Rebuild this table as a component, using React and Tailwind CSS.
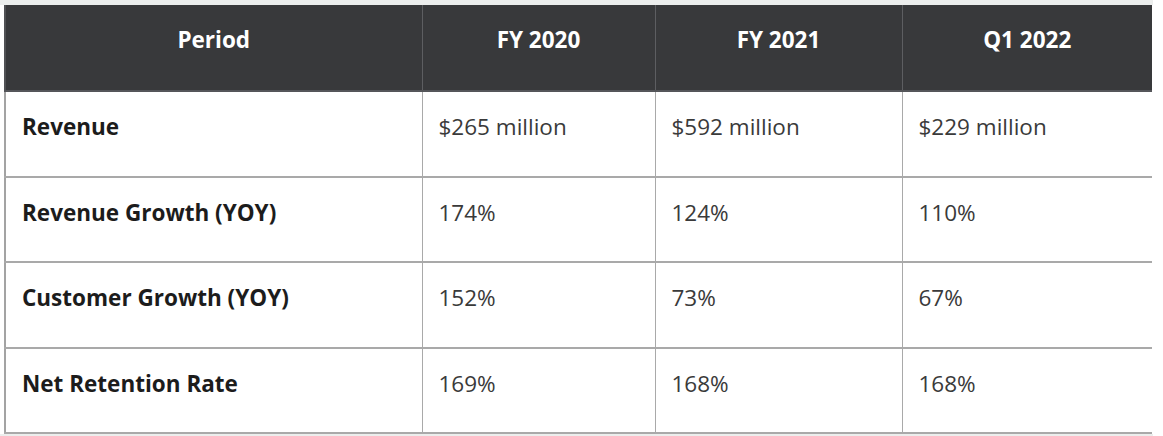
const rows = [
  { label: 'Revenue', values: ['$265 million', '$592 million', '$229 million'], h: 'h-[86px]' },
  { label: 'Revenue Growth (YOY)', values: ['174%', '124%', '110%'], h: 'h-[85px]' },
  { label: 'Customer Growth (YOY)', values: ['152%', '73%', '67%'], h: 'h-[86px]' },
  { label: 'Net Retention Rate', values: ['169%', '168%', '168%'], h: 'h-[85px]' },
]

const headers = ['Period', 'FY 2020', 'FY 2021', 'Q1 2022']

export default function App() {
  return (
    <div className="w-[1163px] h-[436px] bg-white" style={{ fontFamily: '"Open Sans", "Noto Sans", sans-serif' }}>
      <div className="w-[1153px] h-[5px] bg-[#eceeed]" />
      <table className="ml-[4px] border-collapse table-fixed w-[1147px]">
        <colgroup>
          <col className="w-[417px]" />
          <col className="w-[233px]" />
          <col className="w-[247px]" />
          <col className="w-[250px]" />
        </colgroup>
        <thead>
          <tr className="h-[86px] bg-[#38393b]">
            {headers.map((h, i) => (
              <th
                key={h}
                className={`align-top pt-[18px] text-center text-white text-[22.5px] font-bold border-b-[2px] border-b-[#55565a] ${i === 0 ? 'border-l-[2px] border-l-[#505154]' : 'border-l border-l-[#5d5e61]'}`}
              >
                {h}
              </th>
            ))}
          </tr>
        </thead>
        <tbody>
          {rows.map((r) => (
            <tr key={r.label} className={r.h}>
              <td className="align-top pt-[18px] pl-[16px] text-[22.5px] font-bold text-[#1c1c1c] border-l-[2px] border-l-[#a3a3a3] border-b-[2px] border-b-[#a9a9a9]">
                {r.label}
              </td>
              {r.values.map((v, vi) => (
                <td
                  key={vi}
                  className="align-top pt-[18px] pl-[16px] text-[22.5px] font-normal text-[#3a3a3a] border-l border-l-[#a9a9a9] border-b-[2px] border-b-[#a9a9a9]"
                >
                  {v}
                </td>
              ))}
            </tr>
          ))}
        </tbody>
      </table>
      <div className="w-[1153px] h-[2px] bg-[#eceeed]" />
    </div>
  )
}
